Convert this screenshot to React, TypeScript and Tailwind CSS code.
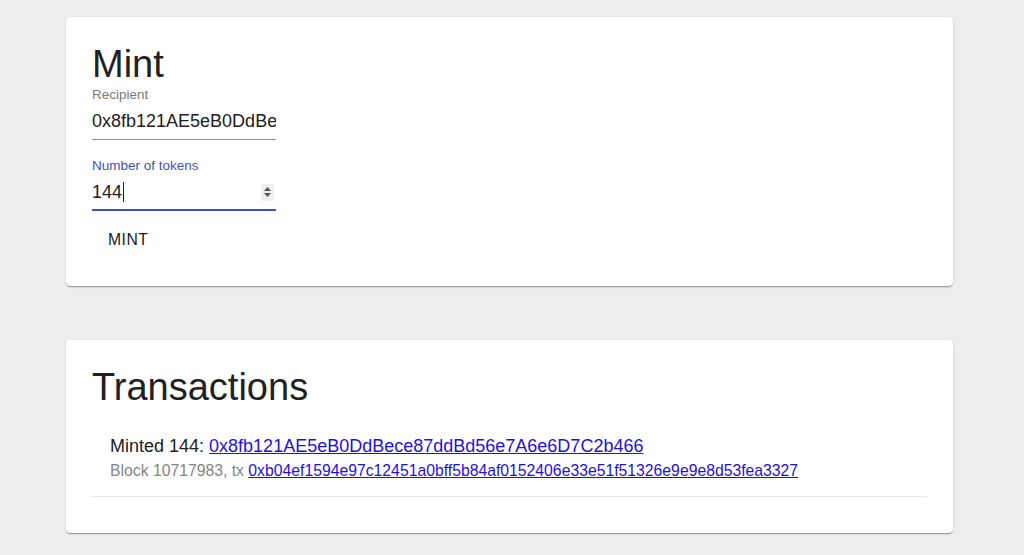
import React from "react";

const font = { fontFamily: '"Liberation Sans", Arial, Helvetica, sans-serif' };

function Card({ children, className = "" }: { children: React.ReactNode; className?: string }) {
  return (
    <div
      className={`ml-[66px] w-[887px] rounded-[4.5px] bg-white pr-[26px] pt-[24px] shadow-[0_2px_1px_-1px_rgba(0,0,0,0.2),0_1px_1px_0_rgba(0,0,0,0.14),0_1px_3px_0_rgba(0,0,0,0.12)] ${className}`}
    >
      {children}
    </div>
  );
}

export default function App() {
  return (
    <div style={font} className="min-h-[555px] w-[1024px] bg-[#eeeeee] pt-[17px]">
      <Card className="pb-[25px] pl-[26px]">
        <h1 className="m-0 text-[38px] leading-[47px] font-normal text-[#212121]">Mint</h1>
        <div className="w-[184px]">
          <div className="text-[13.5px] leading-[14px] text-[#7a7a7a]">Recipient</div>
          <div className="border-b border-[#949494] pt-[8.5px] pb-[7.5px]">
            <input
              readOnly
              value="0x8fb121AE5eB0DdBece87ddBd56e7A6e6D7C2b466"
              style={font}
              className="block h-[21px] w-full border-0 bg-transparent p-0 text-[18px] leading-[21px] text-[#212121] outline-none"
            />
          </div>
          <div className="mt-[19px] text-[13.5px] leading-[14px] text-[#3f51b5]">Number of tokens</div>
          <div className="flex items-center border-b-2 border-[#3f51b5] pt-[8.5px] pb-[6.5px] text-[18px] leading-[21px] text-[#212121]">
            <span>144</span>
            <span className="ml-[1px] inline-block h-[20px] w-[1px] bg-[#212121]" />
            <span className="ml-auto mr-[2px] flex h-[17px] w-[13px] flex-col items-center justify-center gap-[2px] rounded-[2px] bg-[#efefef]">
              <svg width="7" height="4" viewBox="0 0 7 4">
                <path d="M0 4 L3.5 0 L7 4 Z" fill="#555" />
              </svg>
              <svg width="7" height="4" viewBox="0 0 7 4">
                <path d="M0 0 L3.5 4 L7 0 Z" fill="#555" />
              </svg>
            </span>
          </div>
        </div>
        <div className="mt-[8.5px] inline-flex h-[41px] items-center rounded-[4.5px] px-[16px] text-[15.75px] tracking-[0.45px] text-[#212121]">
          MINT
        </div>
      </Card>

      <div className="h-[54px]" />

      <Card className="pb-[27px] pl-[24px]">
        <h2 className="m-0 ml-[2px] text-[38px] leading-[47px] font-normal text-[#212121]">Transactions</h2>
        <div className="py-[9px]">
          <div className="border-b border-[#e8e8e8] px-[20px] py-[9px]">
            <div className="my-[4.5px]">
              <div className="text-[18px] leading-[27px] text-[#212121]">
                Minted 144:{" "}
                <a href="#" className="text-[#1f0fe0] underline">
                  0x8fb121AE5eB0DdBece87ddBd56e7A6e6D7C2b466
                </a>
              </div>
              <div className="text-[15.75px] leading-[22.5px] text-[#858585]">
                Block 10717983, tx{" "}
                <a href="#" className="text-[#1f0fe0] underline">
                  0xb04ef1594e97c12451a0bff5b84af0152406e33e51f51326e9e9e8d53fea3327
                </a>
              </div>
            </div>
          </div>
        </div>
      </Card>
    </div>
  );
}
